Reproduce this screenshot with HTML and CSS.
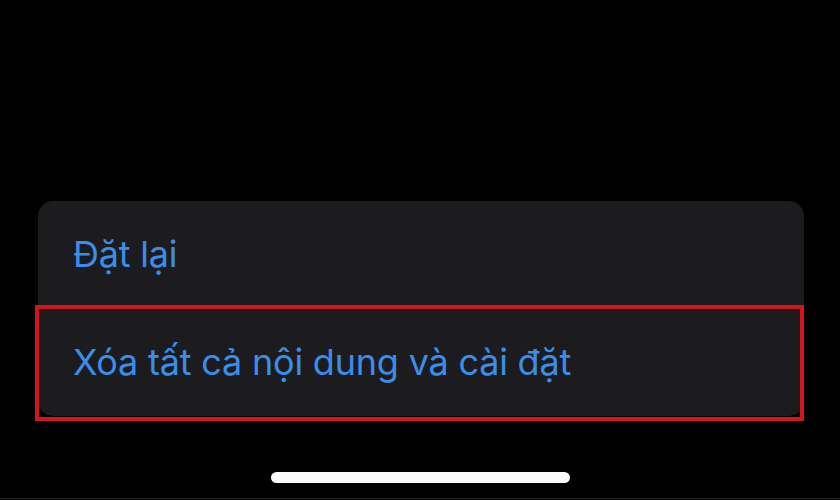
FILE: index.html
```html
<!DOCTYPE html>
<html lang="vi">
<head>
<meta charset="utf-8">
<link rel="stylesheet" href="styles.css">
</head>
<body>
<div class="screen">
  <div class="sheet">
    <div class="row"><span class="label">Đặt lại</span></div>
    <div class="row row-marked"><span class="label">Xóa tất cả nội dung và cài đặt</span></div>
  </div>
  <div class="home-bar"></div>
</div>
</body>
</html>
```

FILE: styles.css
```css
html, body {
  margin: 0;
  padding: 0;
  background: #000;
}
.screen {
  width: 840px;
  height: 499px;
  border-bottom: 1px solid #2b211e;
  display: flex;
  flex-direction: column;
  align-items: flex-start;
  padding: 201px 0 0 38px;
  box-sizing: border-box;
}
.sheet {
  width: 766px;
  background: #1c1c1e;
  border-radius: 15px;
  display: flex;
  flex-direction: column;
}
.row {
  height: 106px;
  display: flex;
  align-items: center;
  padding-left: 35px;
  position: relative;
}
.row-marked {
  height: 109px;
}
.row-marked::after {
  content: "";
  position: absolute;
  top: -2px;
  left: -3px;
  right: 0;
  bottom: -5px;
  border: 4px solid #d3141b;
}
.label {
  font-family: Inter, Roboto, "Noto Sans", sans-serif;
  font-size: 36px;
  letter-spacing: -0.2px;
  color: #3a8eea;
}
.home-bar {
  margin: 56px 0 0 233px;
  width: 299px;
  height: 11px;
  border-radius: 6px;
  background: #fbfbfb;
}
```
